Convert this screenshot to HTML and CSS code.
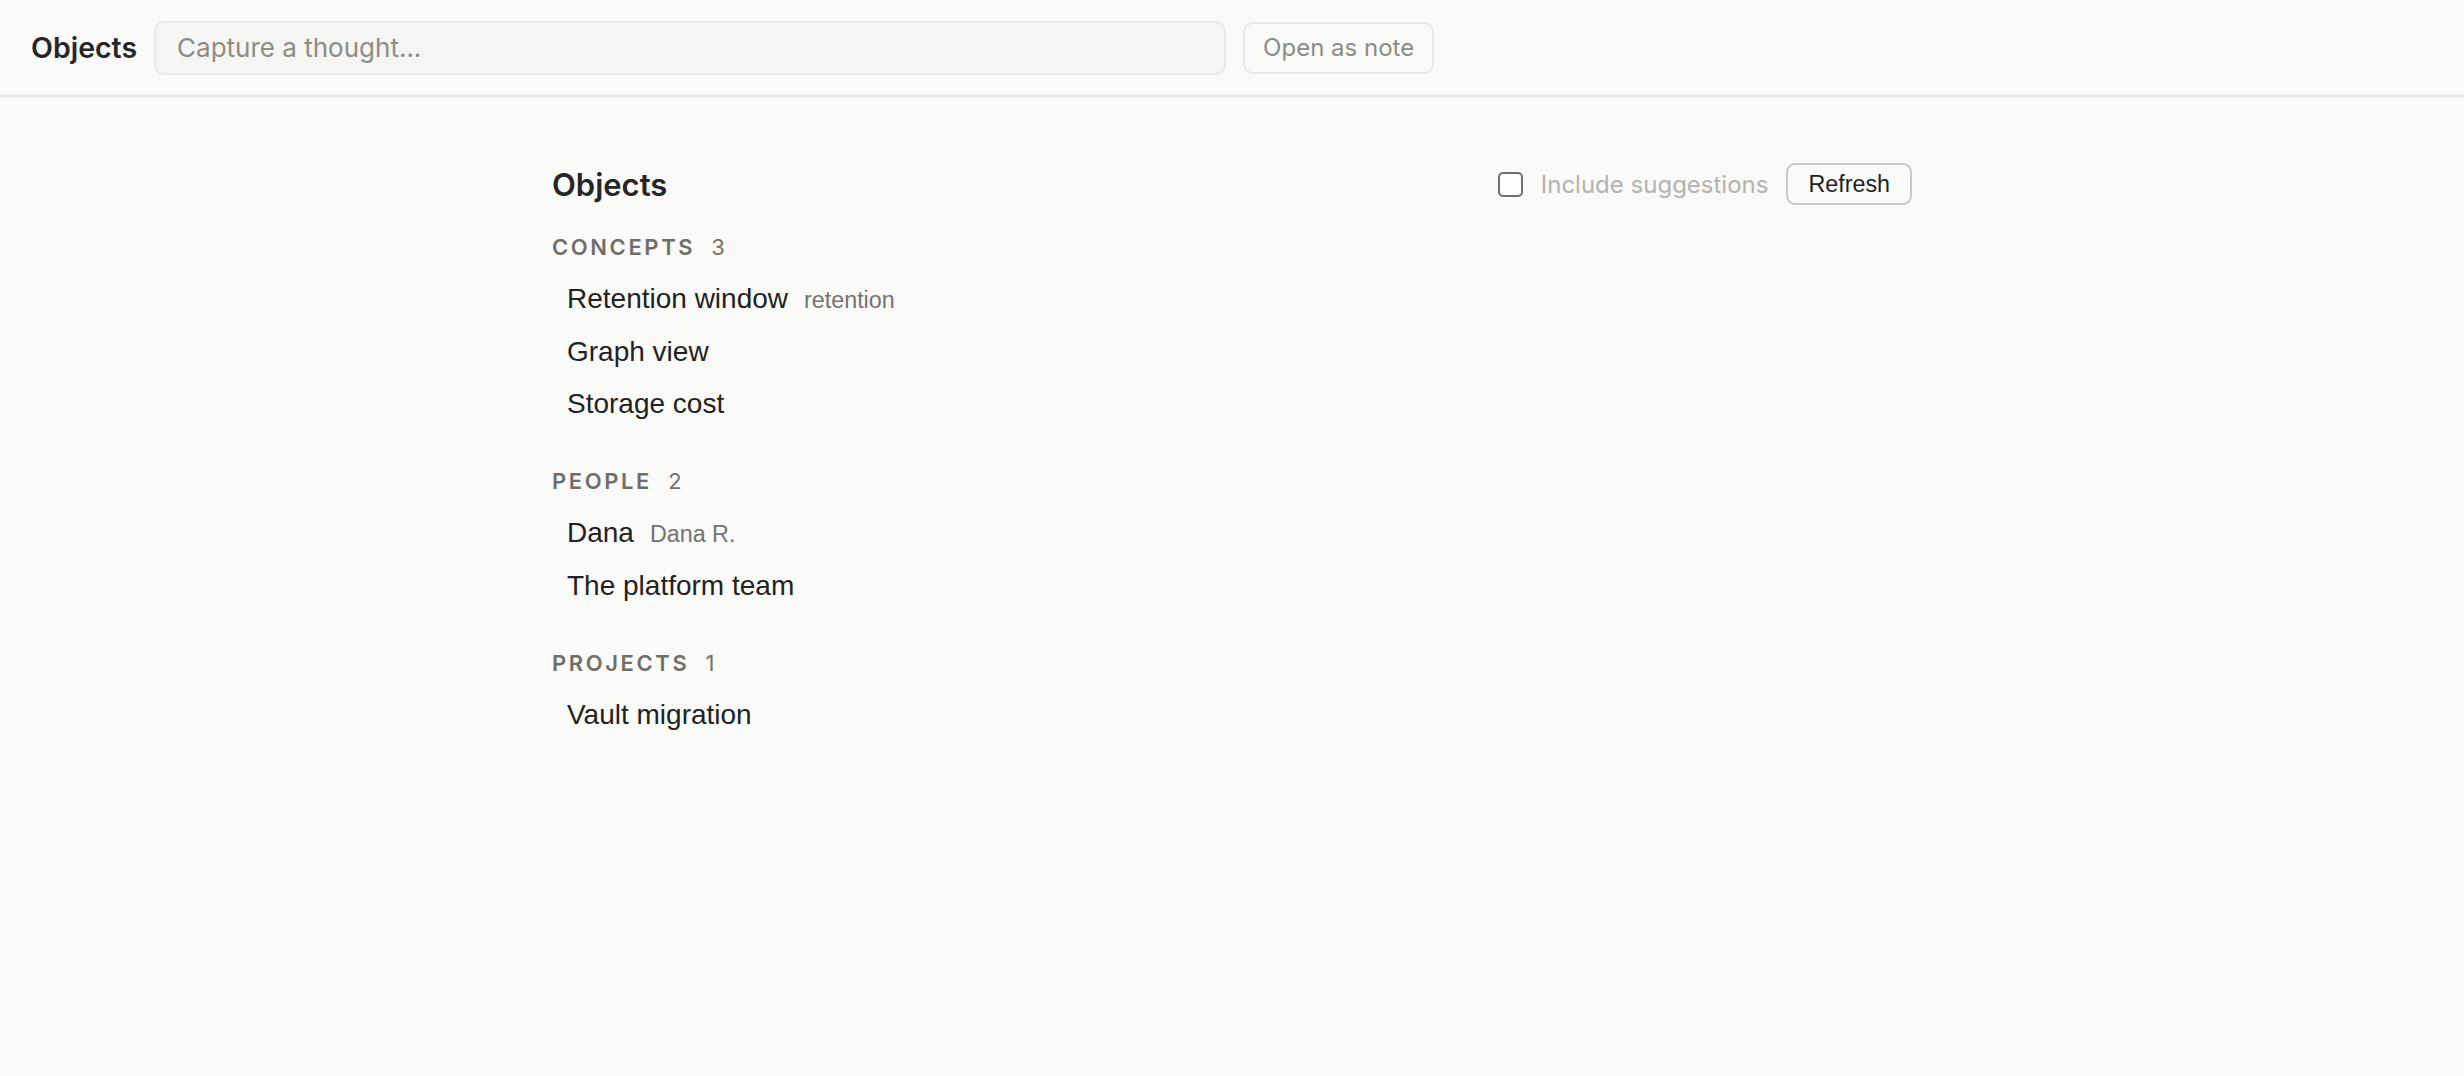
FILE: index.html
```html
<!DOCTYPE html>
<html lang="en">

<head>
    <meta charset="UTF-8">
    <title>Objects</title>
    <link rel="stylesheet" href="styles.css">
</head>

<body>
    <header class="topbar">
        <span class="brand">Objects</span>
        <input type="text" class="capture" placeholder="Capture a thought...">
        <button class="ghost-btn">Open as note</button>
    </header>

    <main class="page">
        <div class="page-head">
            <h1 class="page-title">Objects</h1>
            <div class="controls">
                <label class="toggle">
                    <span class="box"></span>
                    Include suggestions
                </label>
                <button class="refresh">Refresh</button>
            </div>
        </div>

        <section class="group">
            <div class="group-label">Concepts <span class="count">3</span></div>
            <ul class="items">
                <li><span class="name">Retention window</span><span class="alias">retention</span></li>
                <li><span class="name">Graph view</span></li>
                <li><span class="name">Storage cost</span></li>
            </ul>
        </section>

        <section class="group">
            <div class="group-label">People <span class="count">2</span></div>
            <ul class="items">
                <li><span class="name">Dana</span><span class="alias">Dana R.</span></li>
                <li><span class="name">The platform team</span></li>
            </ul>
        </section>

        <section class="group">
            <div class="group-label">Projects <span class="count">1</span></div>
            <ul class="items">
                <li><span class="name">Vault migration</span></li>
            </ul>
        </section>
    </main>
</body>

</html>
```

FILE: styles.css
```css
body {
    margin: 0;
    background-color: #fafaf9;
    color: #262626;
    font-family: Inter, "Liberation Sans", sans-serif;
}

/* top bar */
.topbar {
    display: flex;
    align-items: center;
    gap: 17px;
    height: 95px;
    padding: 0 31px;
    border-bottom: 2px solid #e6e6e4;
}

.brand {
    font-size: 28.5px;
    font-weight: 600;
    color: #262626;
}

.capture {
    box-sizing: border-box;
    width: 1072px;
    height: 54px;
    padding: 0 21px;
    border: 2px solid #e8e8e6;
    border-radius: 10px;
    background-color: #f5f5f4;
    font-family: Inter, sans-serif;
    font-size: 26px;
    color: #262626;
    outline: none;
}

.capture::placeholder {
    color: #8c8c87;
}

.ghost-btn {
    box-sizing: border-box;
    height: 52px;
    padding: 0 18px;
    border: 2px solid #e8e8e6;
    border-radius: 10px;
    background: transparent;
    font-family: Inter, sans-serif;
    font-size: 24px;
    color: #8c8c87;
}

/* content */
.page {
    width: 1360px;
    margin: 0 auto;
    padding-top: 66px;
}

.page-head {
    display: flex;
    align-items: center;
    justify-content: space-between;
    margin-bottom: 29px;
}

.page-title {
    margin: 0;
    font-size: 31px;
    font-weight: 600;
    line-height: 35px;
    color: #262626;
}

.controls {
    display: flex;
    align-items: center;
    gap: 18px;
}

.toggle {
    display: flex;
    align-items: center;
    gap: 18px;
    font-size: 24px;
    color: #b3b3b0;
}

.box {
    box-sizing: border-box;
    width: 25px;
    height: 25px;
    border: 2px solid #707070;
    border-radius: 5px;
    background-color: #fff;
}

.refresh {
    box-sizing: border-box;
    height: 42px;
    padding: 0 20px;
    border: 2px solid #c8c8c6;
    border-radius: 9px;
    background-color: #fafaf9;
    font-family: "Liberation Sans", Arial, sans-serif;
    font-size: 23.3px;
    color: #1f1f1f;
}

.group + .group {
    margin-top: 38px;
}

.group-label {
    font-size: 22px;
    font-weight: 600;
    line-height: 26px;
    letter-spacing: 2.6px;
    text-transform: uppercase;
    color: #6f6f69;
    margin-bottom: 13px;
}

.count {
    margin-left: 8px;
    font-weight: 400;
    letter-spacing: 0;
    color: #72726d;
}

.items {
    list-style: none;
    margin: 0;
    padding: 0;
}

.items li {
    display: flex;
    align-items: baseline;
    padding: 8px 15px;
    font-family: "Liberation Sans", Arial, sans-serif;
    font-size: 28px;
    line-height: 36px;
    color: #222;
}

.alias {
    margin-left: 16px;
    font-size: 23.3px;
    color: #737373;
}
```
